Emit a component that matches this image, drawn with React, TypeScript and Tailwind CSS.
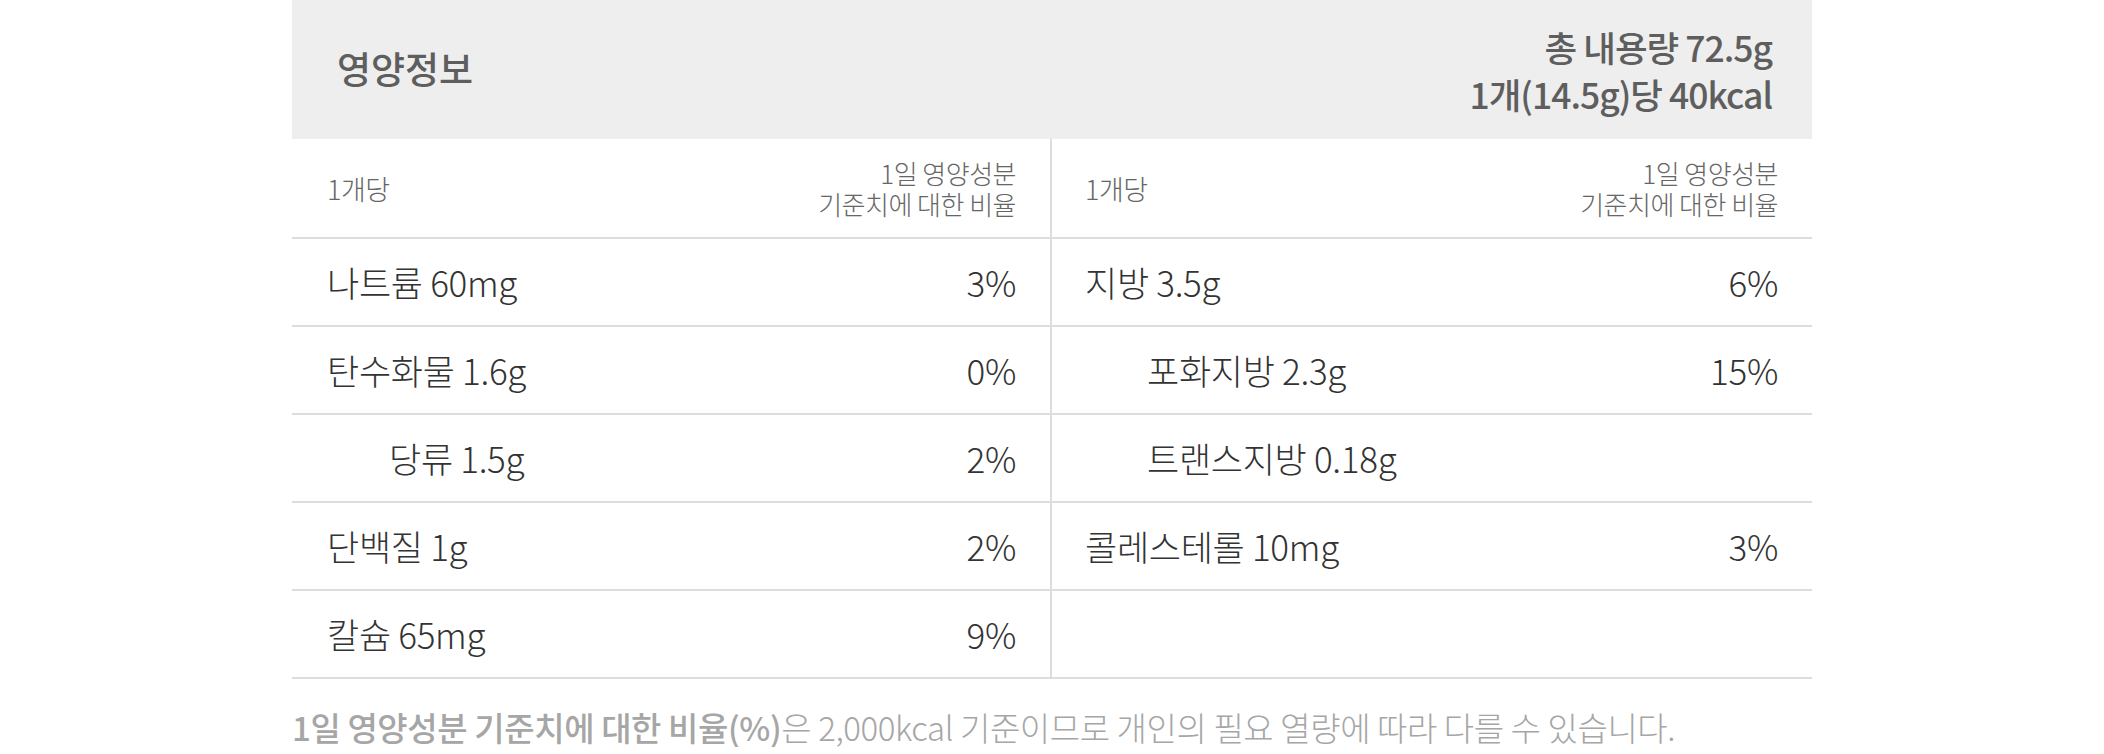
import React from "react";

type Row = { name: string; value: string; indent?: boolean };

const left: Row[] = [
  { name: "나트륨 60mg", value: "3%" },
  { name: "탄수화물 1.6g", value: "0%" },
  { name: "당류 1.5g", value: "2%", indent: true },
  { name: "단백질 1g", value: "2%" },
  { name: "칼슘 65mg", value: "9%" },
];

const right: Row[] = [
  { name: "지방 3.5g", value: "6%" },
  { name: "포화지방 2.3g", value: "15%", indent: true },
  { name: "트랜스지방 0.18g", value: "", indent: true },
  { name: "콜레스테롤 10mg", value: "3%" },
  { name: "", value: "" },
];

function Column({ rows, isLeft }: { rows: Row[]; isLeft?: boolean }) {
  return (
    <div className={isLeft ? "flex flex-col border-r-2 border-[#dddddd]" : "flex flex-col"}>
      <div
        className={
          "flex h-[100px] items-center justify-between border-b-2 border-[#dddddd] " +
          (isLeft ? "pl-[35px] pr-[34px]" : "pl-[33px] pr-[34px]")
        }
      >
        <span className="text-[27px] font-light leading-[31px] tracking-[-0.5px] text-[#666666]">1개당</span>
        <div className="flex flex-col items-end text-[26px] font-light leading-[31px] tracking-[-0.5px] text-[#666666]">
          <span>1일 영양성분</span>
          <span>기준치에 대한 비율</span>
        </div>
      </div>
      {rows.map((r, i) => (
        <div
          key={i}
          className={
            "flex h-[88px] items-center justify-between border-b-2 border-[#dddddd] " +
            (isLeft ? "pl-[35px] pr-[34px]" : "pl-[33px] pr-[34px]")
          }
        >
          <span
            className={
              "text-[35px] font-light leading-[40px] tracking-[-0.3px] text-[#333333] " +
              (r.indent ? "pl-[62px]" : "")
            }
          >
            {r.name}
          </span>
          <span className="text-[35px] font-light leading-[40px] tracking-[-0.3px] text-[#333333]">{r.value}</span>
        </div>
      ))}
    </div>
  );
}

export default function App() {
  return (
    <div
      className="flex w-full justify-center bg-white"
      style={{ fontFamily: '"Noto Sans CJK KR", "Noto Sans", sans-serif' }}
    >
      <div className="w-[1520px]">
        <div className="flex h-[139px] items-center justify-between bg-[#eeeeee] pl-[45px] pr-[40px]">
          <span className="pb-[4px] text-[37px] font-medium leading-[48px] text-[#5e5e5e]">영양정보</span>
          <div className="text-right text-[35.5px] font-medium leading-[47px] tracking-[-1px] text-[#5e5e5e]">
            <div>총 내용량 72.5g</div>
            <div>1개(14.5g)당 40kcal</div>
          </div>
        </div>
        <div className="grid grid-cols-2">
          <Column rows={left} isLeft />
          <Column rows={right} />
        </div>
        <p className="mt-[28px] text-[33px] font-light leading-[40px] tracking-[-0.4px] text-[#a6a6a6]">
          <span className="font-medium">1일 영양성분 기준치에 대한 비율(%)</span>은 2,000kcal 기준이므로 개인의 필요 열량에 따라 다를 수 있습니다.
        </p>
      </div>
    </div>
  );
}
